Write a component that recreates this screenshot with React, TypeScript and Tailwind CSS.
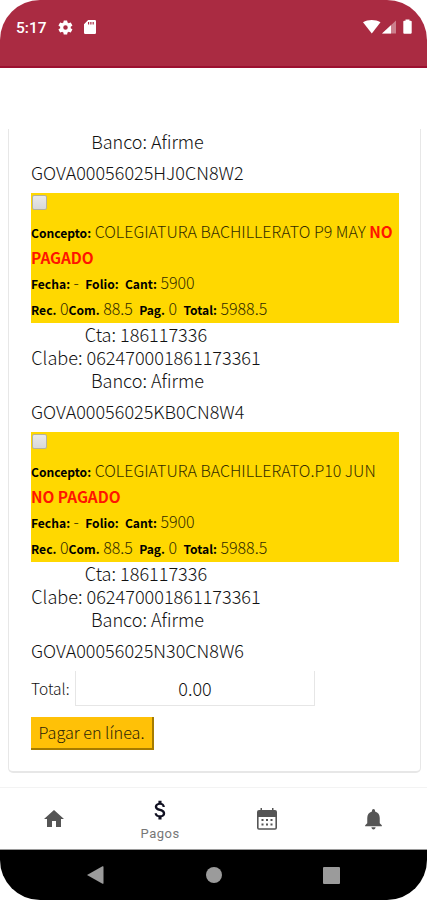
import type { ReactNode } from "react";

interface Payment {
  concept: string;
  status: string;
  reference: string;
}

const payments: Payment[] = [
  { concept: "COLEGIATURA BACHILLERATO P9 MAY", status: "NO PAGADO", reference: "GOVA00056025KB0CN8W4" },
  { concept: "COLEGIATURA BACHILLERATO.P10 JUN", status: "NO PAGADO", reference: "GOVA00056025N30CN8W6" },
];

function Label({ children }: { children: ReactNode }) {
  return <b className="text-[12.1px] leading-none font-bold text-black">{children}</b>;
}

function StatusBar() {
  return (
    <header className="flex h-[68px] shrink-0 items-start border-b-2 border-[#9c1030] bg-[#aa2b42] pr-[14px] pl-4 text-white">
      <span className="mt-[17px] w-[41px] font-['Roboto',sans-serif] text-[15.5px] leading-[22px] font-medium">5:17</span>
      <svg className="mt-[19px] h-[17px] w-[17px]" viewBox="0 0 24 24" fill="currentColor">
        <path d="M19.4 13a7.5 7.5 0 0 0 0-2l2.1-1.6a.5.5 0 0 0 .1-.6l-2-3.5a.5.5 0 0 0-.6-.2l-2.5 1a7.7 7.7 0 0 0-1.7-1L14.4 2.4a.5.5 0 0 0-.5-.4h-4a.5.5 0 0 0-.5.4L9 5.1a7.7 7.7 0 0 0-1.7 1l-2.5-1a.5.5 0 0 0-.6.2l-2 3.5a.5.5 0 0 0 .1.6L4.5 11a7.5 7.5 0 0 0 0 2l-2.2 1.6a.5.5 0 0 0-.1.6l2 3.5c.1.2.4.3.6.2l2.5-1a7.7 7.7 0 0 0 1.7 1l.4 2.7c0 .2.2.4.5.4h4c.3 0 .5-.2.5-.4l.4-2.7a7.7 7.7 0 0 0 1.7-1l2.5 1c.2.1.5 0 .6-.2l2-3.5a.5.5 0 0 0-.1-.6zM12 15.2a3.2 3.2 0 1 1 0-6.4 3.2 3.2 0 0 1 0 6.4z" />
      </svg>
      <svg className="mt-5 ml-[10px] h-[14px] w-3" viewBox="0 0 13 15" fill="currentColor">
        <path fillRule="evenodd" d="M4.5 0h7A1.3 1.3 0 0 1 13 1.3v12.4a1.3 1.3 0 0 1-1.3 1.3H1.3A1.3 1.3 0 0 1 0 13.7V4.5zM4.3 2.2v2.5h1.3V2.2zM6.8 2.2v2.5h1.3V2.2zM9.3 2.2v2.5h1.3V2.2z" />
      </svg>
      <div className="flex-1" />
      <svg className="mt-[19px] h-[15px] w-[50px]" viewBox="0 0 50 15" fill="currentColor">
        <path d="M0 3.2C5 .2 12.5.2 17.5 3.2L8.8 14.5z" />
        <path d="M33 1.5v13H19z" fillOpacity=".4" />
        <path d="M28 6.2v8.3h-9z" />
        <path d="M42.5 1.7V.6h4v1.1h1.3c.5 0 .9.4.9.9v11.2c0 .5-.4.9-.9.9h-6.6a.9.9 0 0 1-.9-.9V2.600c0-.5.4-.9.9-.9z" />
      </svg>
    </header>
  );
}

function PaymentCard({ payment }: { payment: Payment }) {
  return (
    <>
      <div className="h-[130px] w-[368px] bg-[#ffd800] text-[16px] leading-[26px] whitespace-nowrap text-[#332c00]">
        <div className="flex h-[25px] items-start pt-[2px] pl-px">
          <span className="h-[15px] w-[15px] rounded-[2px] border border-[#b5b29a] bg-linear-to-b from-[#e9e9e9] to-[#d8d8d8]" />
        </div>
        <div className="h-[51px] whitespace-normal">
          <Label>Concepto:</Label> {payment.concept}{" "}
          <b className="text-[15.4px] leading-none font-bold text-[#ff1500]">{payment.status}</b>
        </div>
        <div className="h-[26px]">
          <Label>Fecha:</Label> - <Label>&nbsp;Folio:</Label> <Label>&nbsp;Cant:</Label> 5900
        </div>
        <div className="h-[26px]">
          <Label>Rec.</Label> 0<Label>Com.</Label> 88.5 <Label>&nbsp;Pag.</Label> 0 <Label>&nbsp;Total:</Label> 5988.5
        </div>
      </div>
      <div className="flex w-[230px] flex-col items-center text-[18.1px] leading-[23px] whitespace-nowrap">
        <span>Cta: 186117336</span>
        <span>Clabe: 062470001861173361</span>
        <span className="pl-[3px]">Banco: Afirme</span>
      </div>
      <Reference>{payment.reference}</Reference>
    </>
  );
}

function Reference({ children }: { children: ReactNode }) {
  return <div className="h-10 text-[18px] leading-[38px] whitespace-nowrap">{children}</div>;
}

function TabBar() {
  return (
    <nav className="grid h-[63px] shrink-0 grid-cols-4 items-center border-t border-b border-t-[#f3f3f3] border-b-[#9a9a9a] bg-white pt-px text-[#555]">
      <div className="flex justify-center pl-px">
        <svg className="h-6 w-6" viewBox="0 0 24 24" fill="currentColor">
          <path d="M10 20v-6h4v6h5v-8h3L12 3 2 12h3v8z" />
        </svg>
      </div>
      <div className="flex flex-col items-center pt-[2px]">
        <svg className="h-[26px] w-[25px] text-[#111122]" viewBox="0 0 24 24" fill="currentColor">
          <path d="M11.8 10.9c-2.27-.59-3-1.2-3-2.15 0-1.09 1.01-1.85 2.7-1.85 1.78 0 2.44.85 2.5 2.1h2.21c-.07-1.72-1.12-3.3-3.21-3.81V3h-3v2.16c-1.94.42-3.5 1.68-3.5 3.61 0 2.31 1.91 3.46 4.7 4.13 2.5.6 3 1.48 3 2.41 0 .69-.49 1.79-2.7 1.79-2.06 0-2.87-.92-2.98-2.1h-2.2c.12 2.19 1.76 3.42 3.68 3.83V21h3v-2.15c1.95-.37 3.5-1.5 3.5-3.55 0-2.84-2.43-3.81-4.7-4.4z" />
        </svg>
        <span className="font-['Roboto',sans-serif] text-[13px] leading-[21px] font-normal tracking-[0.5px] text-[#777]">Pagos</span>
      </div>
      <div className="flex justify-center pl-px">
        <svg className="h-[22px] w-5" viewBox="0 0 20 22" fill="currentColor">
          <path d="M3.5 0H5v3H3.5zM15 0h1.5v3H15zM2 2h16a2 2 0 0 1 2 2v5H0V4a2 2 0 0 1 2-2z" />
          <path d="M.8 8v11.7c0 .7.500 1.300 1.200 1.300h16c.7 0 1.200-.6 1.200-1.300V8" fill="none" stroke="currentColor" strokeWidth="1.6" />
          <path d="M4.5 11h2v2h-2zM9 11h2v2H9zM13.5 11h2v2h-2zM4.5 15.5h2v2h-2zM9 15.5h2v2H9zM13.5 15.5h2v2h-2z" />
        </svg>
      </div>
      <div className="flex justify-center">
        <svg className="h-[26px] w-[25px]" viewBox="0 0 24 24" fill="currentColor">
          <path d="M12 22c1.1 0 2-.9 2-2h-4c0 1.1.9 2 2 2zm6-6v-5c0-3.07-1.63-5.64-4.5-6.32V4a1.5 1.5 0 0 0-3 0v.68C7.64 5.36 6 7.92 6 11v5l-2 2v1h16v-1z" />
        </svg>
      </div>
    </nav>
  );
}

export default function App() {
  return (
    <div className="h-[900px] w-[427px] overflow-hidden bg-white">
      <div className="flex h-full flex-col overflow-hidden rounded-[40px] bg-white font-['Noto_Sans_CJK_SC',sans-serif] font-light text-[#111]">
        <StatusBar />

        <main className="h-[719px] shrink-0 pr-[6px] pt-[61px] pl-2">
          <div className="h-[644px] w-[413px] rounded-b-[5px] border-x border-b-2 border-[#e7e7e7] pl-[22px]">
            <div className="flex h-6 w-[233px] items-center justify-center text-[18px] leading-[24px]">Banco: Afirme</div>
            <Reference>GOVA00056025HJ0CN8W2</Reference>
            {payments.map((p) => (
              <PaymentCard key={p.reference} payment={p} />
            ))}

            <div className="flex h-[35px] items-center">
              <span className="w-11 pt-px text-[15.5px] whitespace-nowrap">Total:</span>
              <div className="h-[35px] w-[240px] border-x border-b border-[#e6e6e6] text-center text-[18px] leading-[34px]">0.00</div>
            </div>
            <button className="mt-[11px] block h-[33px] w-[123px] border-r-2 border-b-2 border-[#a67c00] bg-[#ffc107] text-[16.2px] leading-[31px] font-light whitespace-nowrap text-[#2b2408]">
              Pagar en línea.
            </button>
          </div>
        </main>

        <TabBar />

        <footer className="flex h-[50px] shrink-0 items-center bg-black pl-[87px] text-[#9b9b9b]">
          <svg className="h-[18px] w-[17px]" viewBox="0 0 17 18" fill="currentColor">
            <path d="M0 9 15.5.3q1-.5 1 .7v16q0 1.2-1 .7z" />
          </svg>
          <span className="ml-[102px] h-4 w-4 rounded-full bg-[#9b9b9b]" />
          <span className="ml-[101px] h-[17px] w-[17px] rounded-[1px] bg-[#9b9b9b]" />
        </footer>
      </div>
    </div>
  );
}
